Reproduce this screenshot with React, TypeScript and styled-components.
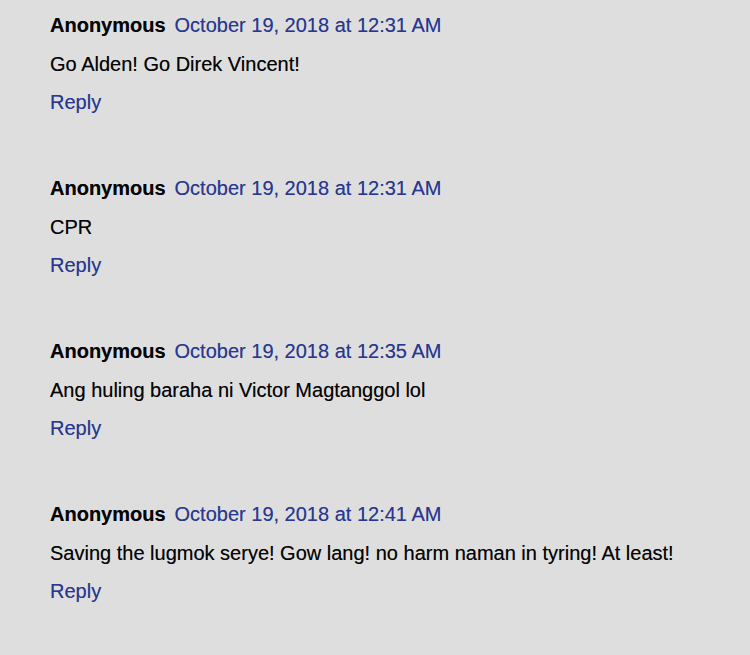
import React from "react";
import styled, { createGlobalStyle } from "styled-components";

const Global = createGlobalStyle`
  html, body { margin: 0; padding: 0; background: #dedede; }
  body { font-family: "Liberation Sans", Arial, sans-serif; }
`;

const Page = styled.div`
  width: 750px;
  height: 655px;
  overflow: hidden;
  background: #dedede;
  padding: 6px 0 0 50px;
  box-sizing: border-box;
  display: flex;
  flex-direction: column;
  gap: 48px;
`;

const Comment = styled.div`
  display: flex;
  flex-direction: column;
`;

const Line = styled.div`
  height: 38px;
  line-height: 38px;
  font-size: 20px;
  color: #050505;
  white-space: nowrap;
  text-shadow: 0 0 0.4px rgba(0, 0, 0, 0.5);
`;

const Header = styled(Line)`
  height: 39px;
`;

const Author = styled.span`
  font-weight: bold;
  margin-right: 9px;
`;

const DateLink = styled.span`
  color: #28388f;
  text-shadow: 0 0 0.4px rgba(40, 56, 143, 0.5);
`;

const Body = styled(Line)``;

const Reply = styled(Line)`
  color: #28388f;
  text-shadow: 0 0 0.4px rgba(40, 56, 143, 0.5);
`;

const comments = [
  { date: "October 19, 2018 at 12:31 AM", text: "Go Alden! Go Direk Vincent!" },
  { date: "October 19, 2018 at 12:31 AM", text: "CPR" },
  { date: "October 19, 2018 at 12:35 AM", text: "Ang huling baraha ni Victor Magtanggol lol" },
  {
    date: "October 19, 2018 at 12:41 AM",
    text: "Saving the lugmok serye! Gow lang! no harm naman in tyring! At least!",
  },
];

export default function App() {
  return (
    <>
      <Global />
      <Page>
        {comments.map((c, i) => (
          <Comment key={i}>
            <Header>
              <Author>Anonymous</Author>
              <DateLink>{c.date}</DateLink>
            </Header>
            <Body>{c.text}</Body>
            <Reply>Reply</Reply>
          </Comment>
        ))}
      </Page>
    </>
  );
}
